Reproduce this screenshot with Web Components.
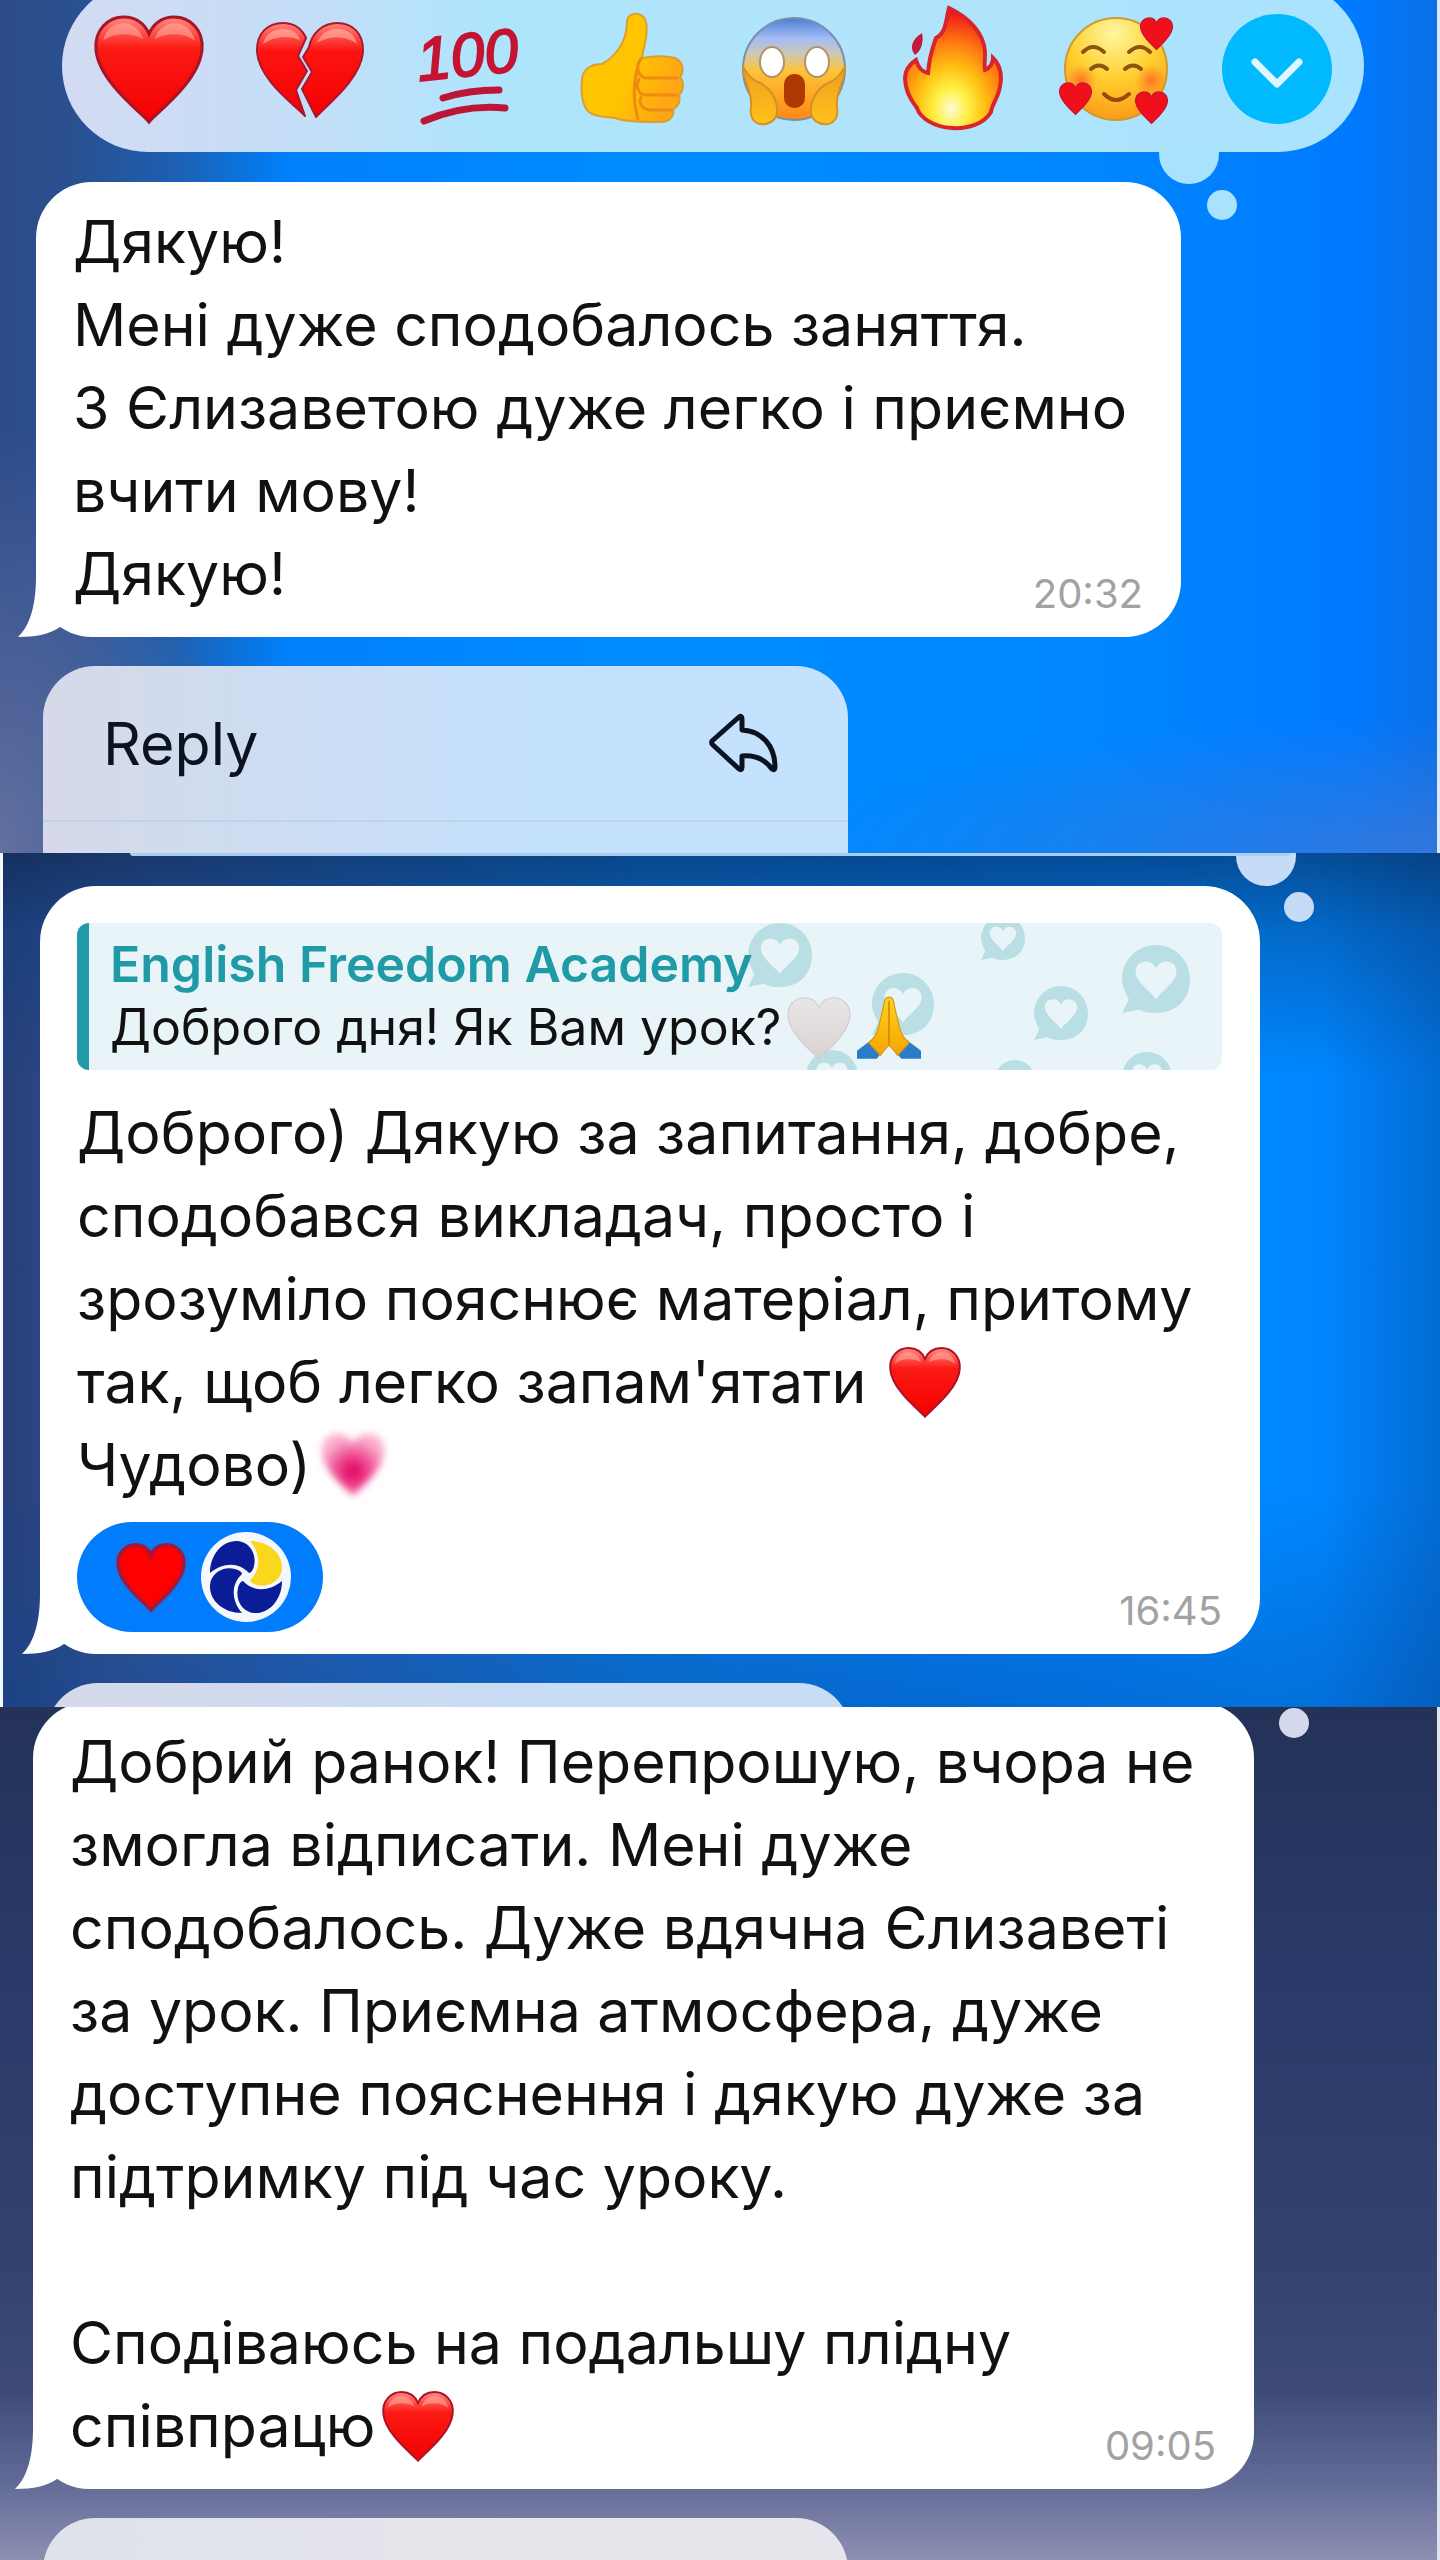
<!DOCTYPE html>
<html lang="uk">
<head>
<meta charset="utf-8">
<meta name="viewport" content="width=device-width, initial-scale=1">
<title>Відгуки</title>
<style>
    body {
        margin: 0;
        font-family: Inter, "Liberation Sans", sans-serif;
        color: #111;
    }

    .blue {
        --edge-right: 3px solid #dce8f8;
        --wall: radial-gradient(ellipse 16% 50% at 0 100%, rgba(104, 116, 164, .9), rgba(98, 110, 160, 0)),
            radial-gradient(ellipse 45% 16% at 100% 100%, rgba(60, 120, 215, .8), rgba(60, 120, 215, 0)),
            linear-gradient(90deg, #2d4b88 0%, #2a5090 5%, #1d5fb0 12%, #0080fc 20%, #008cff 45%, #0087ff 75%, #007aff 94%, #0a70e8 100%);
    }

    .dusk {
        --edge-left: 3px solid #f4f7fb;
        --wall: linear-gradient(180deg, rgba(8, 38, 80, .6) 0%, rgba(8, 60, 120, .4) 9%, rgba(0, 90, 180, 0) 26%, rgba(0, 90, 180, 0) 75%, rgba(8, 70, 150, .35) 100%),
            linear-gradient(90deg, rgba(8, 70, 140, 0) 92%, rgba(8, 70, 140, .35) 100%),
            linear-gradient(90deg, #27407a 0%, #32508f 8%, #2560b4 22%, #0878e0 45%, #0080fc 75%, #0088ff 88%, #0080fa 100%);
    }

    .night {
        --edge-right: 3px solid #dfe3ee;
        --wall: linear-gradient(180deg, #243258 0%, #2a3a68 30%, #33426f 65%, #3d4a78 80%, #666e9a 92%, #8e90b2 100%);
    }

    .blue chat-bubble { --gap-left: 36px; --gap-right: 256px; }
    .dusk chat-bubble { --gap-left: 37px; --gap-right: 180px; }
    .night chat-bubble { --gap-left: 33px; --gap-right: 183px; --gap-top: -5px; }

    .blue thought-dots { --top: 124px; --right: 200px; }
    .dusk thought-dots { --top: -27px; --right: 126px; --dots: #c6dbf5; }
    .night thought-dots { --top: -65px; --right: 128px; --dots: #d4d8ec; }

    .dusk context-menu { --height: 24px; --to: #c8dcf5; }
    .night context-menu { --height: 42px; --from: #dfe2ea; --to: #e6e6ec; }
</style>
</head>
<body>
<main>
    <chat-panel class="blue">
        <thought-dots></thought-dots>
        <reaction-bar></reaction-bar>
        <chat-bubble time="20:32">Дякую!<br>Мені дуже сподобалось заняття.<br>З Єлизаветою дуже легко і приємно<br>вчити мову!<br>Дякую!</chat-bubble>
        <context-menu><menu-item>Reply</menu-item></context-menu>
    </chat-panel>

    <chat-panel class="dusk">
        <thought-dots></thought-dots>
        <reaction-bar folded></reaction-bar>
        <chat-bubble time="16:45">
            <quote-card slot="quote" author="English Freedom Academy">Доброго дня! Як Вам урок?<chat-emoji name="white-heart"></chat-emoji><chat-emoji name="pray"></chat-emoji></quote-card>Доброго) Дякую за запитання, добре,<br>сподобався викладач, просто і<br>зрозуміло пояснює матеріал, притому<br>так, щоб легко запам'ятати <chat-emoji name="heart"></chat-emoji><br>Чудово)<chat-emoji name="glow-heart"></chat-emoji>
            <reaction-pill slot="reactions"></reaction-pill>
        </chat-bubble>
        <context-menu></context-menu>
    </chat-panel>

    <chat-panel class="night">
        <thought-dots></thought-dots>
        <chat-bubble time="09:05">Добрий ранок! Перепрошую, вчора не<br>змогла відписати. Мені дуже<br>сподобалось. Дуже вдячна Єлизаветі<br>за урок. Приємна атмосфера, дуже<br>доступне пояснення і дякую дуже за<br>підтримку під час уроку.<br><br>Сподіваюсь на подальшу плідну<br>співпрацю<chat-emoji name="heart"></chat-emoji></chat-bubble>
        <context-menu></context-menu>
    </chat-panel>
</main>

<script>
const HEART = 'M55 108C49 100 5 68 2 36C0 16 14 3 30 3C42 3 51 10 55 20C59 10 68 3 80 3C96 3 110 16 108 36C105 68 61 100 55 108Z';

const EMOJI = {
    'heart': `
        <defs>
            <linearGradient id="g" x2="0" y2="1"><stop offset="0" stop-color="#ff8a80"/><stop offset=".3" stop-color="#fb1a14"/><stop offset="1" stop-color="#f40000"/></linearGradient>
        </defs>
        <path d="${HEART}" fill="url(#g)" stroke="#a81428" stroke-width="3"/>
        <path d="M9 27C12 12 25 7 35 10C43 13 47 18 49 25C39 19 20 18 9 27ZM101 27C98 12 85 7 75 10C67 13 63 18 61 25C71 19 90 18 101 27Z" fill="#ffb0a0" opacity=".55"/>`,
    'flat-heart': `
        <path d="${HEART}" fill="#fe0000" stroke="#a3183c" stroke-width="6"/>`,
    'white-heart': `
        <defs>
            <linearGradient id="g" x2="0" y2="1"><stop offset="0" stop-color="#e9e5e6"/><stop offset="1" stop-color="#d9d2d3"/></linearGradient>
        </defs>
        <path d="${HEART}" fill="url(#g)" stroke="#d2cccd" stroke-width="2"/>`,
    'glow-heart': `
        <defs>
            <filter id="b" x="-.2" y="-.2" width="1.4" height="1.4"><feGaussianBlur stdDeviation="6"/></filter>
            <radialGradient id="g" cy=".6" r=".55"><stop offset="0" stop-color="#e0005c"/><stop offset=".3" stop-color="#ea2a7e"/><stop offset="1" stop-color="#fbb4d2"/></radialGradient>
        </defs>
        <path d="M55 103C49 95 9 66 7 36C6 16 18 7 32 7C44 7 51 14 55 22C59 14 66 7 78 7C92 7 104 16 103 36C101 66 61 95 55 103Z" fill="url(#g)" filter="url(#b)"/>`,
    'broken-heart': `
        <defs>
            <linearGradient id="g" x2="0" y2="1"><stop offset="0" stop-color="#ff8478"/><stop offset=".3" stop-color="#fc1410"/><stop offset="1" stop-color="#f40000"/></linearGradient>
        </defs>
        <g fill="url(#g)" stroke="#a81830" stroke-width="2" stroke-linejoin="round">
            <path d="M50 102C40 91 4 66 2 38C1 19 13 9 28 9C39 9 47 15 51 24L43 42L52 57L41 76Z"/>
            <path d="M61 103C72 91 106 65 108 38C109 19 97 9 82 9C68 9 57 19 54 33L48 43L57 58L47 75Z"/>
        </g>
        <path d="M8 30C11 17 24 13 35 16C41 18 44 22 45 26C34 21 19 22 8 30ZM102 30C99 17 86 13 75 16C68 18 64 24 62 29C72 22 91 21 102 30Z" fill="#ffb8ac" opacity=".6"/>`,
    'hundred': `
        <text x="3" y="67" transform="rotate(-6 3 67)" font-family="Liberation Sans, sans-serif" font-size="61" font-style="italic" fill="#c41432" stroke="#c41432" stroke-width="2">100</text>
        <path d="M27 84Q52 76 83 76M8 107Q48 90 89 94" fill="none" stroke="#bd1536" stroke-width="7" stroke-linecap="round"/>`,
    'thumb': `
        <defs>
            <linearGradient id="g" x2="1" y2=".5"><stop offset="0" stop-color="#fdc800"/><stop offset=".6" stop-color="#ffc400"/><stop offset="1" stop-color="#ffa516"/></linearGradient>
        </defs>
        <path d="M50 8C50 -3 67 -3 69 8C72 22 66 34 65 44C76 42 90 42 98 44C107 48 107 58 103 63C108 69 106 78 102 81C104 87 101 93 96 95C98 103 91 108 84 108C67 108 49 108 38 104C28 102 20 104 12 98C4 91 4 77 5 65C6 55 14 50 25 50C36 44 50 30 50 8Z" fill="url(#g)" stroke="#d9a030" stroke-width="2"/>
        <path d="M64 45C58 52 61 62 68 64H100M62 65C58 73 62 81 69 81H99M64 83C61 90 66 95 73 96H94M61 52C56 70 56 88 61 105" fill="none" stroke="#ee8c10" stroke-width="3" stroke-linecap="round"/>`,
    'scream': `
        <defs>
            <linearGradient id="g" x2="0" y2="1"><stop offset="0" stop-color="#4a7fd2"/><stop offset=".2" stop-color="#a4bbf5"/><stop offset=".36" stop-color="#d0c8b0"/><stop offset=".52" stop-color="#ffc336"/><stop offset="1" stop-color="#ff8714"/></linearGradient>
            <linearGradient id="h" x2="0" y2="1"><stop offset="0" stop-color="#f19c20"/><stop offset="1" stop-color="#ffc21a"/></linearGradient>
        </defs>
        <circle cx="55" cy="55" r="51" fill="url(#g)" stroke="#7890ae" stroke-width="2"/>
        <ellipse cx="33" cy="48" rx="12" ry="15" fill="#fff" stroke="#b09468" stroke-width="2"/>
        <ellipse cx="78" cy="48" rx="12" ry="15" fill="#fff" stroke="#b09468" stroke-width="2"/>
        <rect x="45" y="60" width="21" height="34" rx="10" fill="#ae3800"/>
        <path id="p" d="M4 53C4 68 14 78 12 93C8 116 36 114 38 99C39 86 32 75 21 69C11 65 9 60 4 53Z" fill="url(#h)" stroke="#d2922a" stroke-width="2"/>
        <use href="#p" transform="matrix(-1 0 0 1 110 0)"/>`,
    'fire': `
        <defs>
            <radialGradient id="g" cx=".48" cy=".84" r=".8"><stop offset="0" stop-color="#fffbd0"/><stop offset=".22" stop-color="#fff044"/><stop offset=".45" stop-color="#ffbe10"/><stop offset=".7" stop-color="#ff7812"/><stop offset="1" stop-color="#f01818"/></radialGradient>
        </defs>
        <path d="M49 -6C70 4 84 20 85 38C85 46 84 52 85 56C90 54 93 49 93 44C103 54 102 68 98 80C94 90 91 94 91 98C84 110 68 115 52 114C34 113 20 104 17 94C9 84 5 74 5 64C5 55 10 50 16 46C18 53 22 58 28 59C29 45 32 35 36 24C47 18 46 4 49 -6Z" fill="url(#g)" stroke="#d8242a" stroke-width="4"/>
        <path d="M22 19C12 25 9 34 15 41C21 37 24 28 22 19Z" fill="#c01a3c"/>`,
    'love': `
        <defs>
            <radialGradient id="g" cx=".48" cy=".15" r=".9"><stop offset="0" stop-color="#fff7a0"/><stop offset=".5" stop-color="#ffcf2e"/><stop offset="1" stop-color="#fb9416"/></radialGradient>
            <radialGradient id="c"><stop offset="0" stop-color="#ff5c28" stop-opacity=".75"/><stop offset="1" stop-color="#ff7020" stop-opacity="0"/></radialGradient>
            <path id="h" d="${HEART}" fill="#f0101c" stroke="#c41438" stroke-width="4"/>
        </defs>
        <circle cx="55" cy="55" r="51" fill="url(#g)" stroke="#cf9a30" stroke-width="2"/>
        <circle cx="20" cy="66" r="16" fill="url(#c)"/>
        <circle cx="90" cy="66" r="16" fill="url(#c)"/>
        <path d="M22 38Q32 28 43 38M68 38Q79 28 89 38M30 55Q38 48 46 55M64 55Q72 48 80 55" fill="none" stroke="#8c5410" stroke-width="4" stroke-linecap="round"/>
        <path d="M43 80Q55 92 68 80" fill="none" stroke="#9a4a08" stroke-width="4" stroke-linecap="round"/>
        <use href="#h" transform="translate(79 3) scale(.3)"/>
        <use href="#h" transform="translate(-2 68) scale(.3)"/>
        <use href="#h" transform="translate(74 77) scale(.3)"/>`,
    'pray': `
        <defs>
            <linearGradient id="g" x2="0" y2="1"><stop offset="0" stop-color="#ffd21a"/><stop offset="1" stop-color="#f7a400"/></linearGradient>
        </defs>
        <path d="M0 108V94L24 76L42 98L34 108ZM110 108V94L86 76L68 98L76 108Z" fill="#2b7cc8"/>
        <path d="M55 2C48 2 47 8 46 16L37 54C34 66 26 76 20 80L40 102C45 94 52 88 55 84C58 88 65 94 70 102L90 80C84 76 76 66 73 54L64 16C63 8 62 2 55 2Z" fill="url(#g)" stroke="#d99410" stroke-width="2"/>
        <path d="M55 8V84" stroke="#d58a08" stroke-width="3"/>`
};

customElements.define('chat-emoji',
    class extends HTMLElement {
        connectedCallback(){
            const shadowRoot = this.attachShadow({mode: 'open'});
            shadowRoot.innerHTML = `
    <style>
        :host{
            display: inline-block;
            width: var(--emoji-size, 72px);
            height: var(--emoji-size, 72px);
            vertical-align: -15px;
        }

        svg{
            display: block;
            width: 100%;
            height: 100%;
            overflow: visible;
        }
    </style>
    <svg viewBox="0 0 110 110" aria-hidden="true">${EMOJI[this.getAttribute('name')]}</svg>
`;
        }
    }
);

customElements.define('chat-panel',
    class extends HTMLElement {
        connectedCallback(){
            const shadowRoot = this.attachShadow({mode: 'open'});
            shadowRoot.innerHTML = `
    <style>
        :host{
            display: flex;
            flex-direction: column;
            position: relative;
            overflow: hidden;
            border-left: var(--edge-left, none);
            border-right: var(--edge-right, none);
            background: var(--wall);
        }
    </style>
    <slot></slot>
`;
        }
    }
);

/* the two circles that hang under the reaction bar */
customElements.define('thought-dots',
    class extends HTMLElement {
        connectedCallback(){
            const shadowRoot = this.attachShadow({mode: 'open'});
            shadowRoot.innerHTML = `
    <style>
        :host{
            position: absolute;
            top: var(--top);
            right: var(--right);
        }

        svg{
            display: block;
            fill: var(--dots, #a9e2fc);
        }
    </style>
    <svg width="78" height="96" aria-hidden="true">
        <circle cx="30" cy="30" r="30"/>
        <circle cx="63" cy="81" r="15"/>
    </svg>
`;
        }
    }
);

customElements.define('reaction-bar',
    class extends HTMLElement {
        connectedCallback(){
            const names = ['heart', 'broken-heart', 'hundred', 'thumb', 'scream', 'fire', 'love'];
            const shadowRoot = this.attachShadow({mode: 'open'});
            shadowRoot.innerHTML = `
    <style>
        :host{
            --emoji-size: 110px;
            display: flex;
            justify-content: space-between;
            position: relative;
            margin: -20px 73px 0 62px;
            padding: 34px 32px 28px;
            border-radius: 86px;
            background: linear-gradient(90deg, #d3dbf2 0%, #c3dff8 20%, #ade5fd 34%, #b2e4fb 60%, #a9e3fd 100%);
        }

        /* only the lower edge of the bar is in view */
        :host([folded]){
            height: 3px;
            margin: 0 150px 0 127px;
            padding: 0;
            border-radius: 0 0 3px 3px;
            background: #a9cdf0;
        }

        :host([folded]) button{
            display: none;
        }

        button{
            width: 110px;
            height: 110px;
            padding: 0;
            border: 0;
            background: none;
        }

        chat-emoji{
            display: block;
        }

        .more{
            border-radius: 50%;
            background: #00b9ff;
        }
    </style>
    ${names.map(name => `<button type="button" aria-label="${name}"><chat-emoji name="${name}"></chat-emoji></button>`).join('')}
    <button type="button" class="more" aria-label="more">
        <svg width="110" height="110" viewBox="0 0 110 110" fill="none" stroke="#dff6ff" stroke-width="7" stroke-linecap="round" stroke-linejoin="round"><path d="M33 48L55 70L77 48"/></svg>
    </button>
`;
        }
    }
);

customElements.define('chat-bubble',
    class extends HTMLElement {
        connectedCallback(){
            const shadowRoot = this.attachShadow({mode: 'open'});
            shadowRoot.innerHTML = `
    <style>
        :host{
            display: grid;
            position: relative;
            margin: var(--gap-top, 30px) var(--gap-right) 0 var(--gap-left);
            padding: 18px 38px 22px 37px;
            border-radius: 56px;
            background: #fff;
            font-size: 59px;
            line-height: 83px;
        }

        .body, time{
            grid-area: 1 / 1;
        }

        ::slotted(chat-emoji){
            margin-left: 6px;
        }

        time{
            align-self: end;
            justify-self: end;
            font-size: 40px;
            line-height: 42px;
            color: #a2a2a4;
        }

        .tail{
            position: absolute;
            left: -20px;
            bottom: 0;
            fill: #fff;
        }
    </style>
    <div class="body">
        <slot name="quote"></slot>
        <div><slot></slot></div>
        <slot name="reactions"></slot>
    </div>
    <time>${this.getAttribute('time')}</time>
    <svg class="tail" width="56" height="60" aria-hidden="true"><path d="M20 0C20 30 13 50 2 60C20 60 34 57 44 50L54 20Z"/></svg>
`;
        }
    }
);

customElements.define('quote-card',
    class extends HTMLElement {
        connectedCallback(){
            /* x, y and radius of every chat heart in the pattern */
            const marks = [[58, 32, 32], [181, 81, 31], [281, 15, 22], [434, 56, 34], [339, 90, 27], [110, 153, 26], [293, 157, 20], [425, 154, 25]];
            const shadowRoot = this.attachShadow({mode: 'open'});
            shadowRoot.innerHTML = `
    <style>
        :host{
            --emoji-size: 64px;
            display: block;
            position: relative;
            overflow: hidden;
            margin: 19px 0 21px;
            padding: 10px 12px 11px 21px;
            border-left: 12px solid #1f9aa6;
            border-radius: 12px;
            background: #e8f4f7;
            font-size: 50px;
            line-height: 63px;
        }

        cite, .text{
            display: block;
            position: relative;
        }

        cite{
            font-style: normal;
            font-weight: 600;
            color: #1f9aa6;
        }

        .text{
            height: 63px;
        }

        .pattern{
            position: absolute;
            top: 0;
            right: 0;
        }

        ::slotted(chat-emoji){
            margin-left: 6px;
        }
    </style>
    <svg class="pattern" width="500" height="147" aria-hidden="true">
        <defs>
            <g id="m">
                <path d="M0 -10C6 -10 10 -5 10 0C10 6 6 10 0 10C-2 10 -3 10 -5 9L-10 10L-8 6C-9 4 -10 2 -10 0C-10 -5 -6 -10 0 -10Z" fill="#b9dfe4"/>
                <path d="M0 6C-1 4 -6 1 -6 -2C-6 -6 -1 -6 0 -3C1 -6 6 -6 6 -2C6 1 1 4 0 6Z" fill="#e8f4f7"/>
            </g>
        </defs>
        ${marks.map(([x, y, r]) => `<use href="#m" transform="translate(${x} ${y}) scale(${r / 10})"/>`).join('')}
    </svg>
    <cite>${this.getAttribute('author')}</cite>
    <div class="text"><slot></slot></div>
`;
        }
    }
);

customElements.define('reaction-pill',
    class extends HTMLElement {
        connectedCallback(){
            const shadowRoot = this.attachShadow({mode: 'open'});
            shadowRoot.innerHTML = `
    <style>
        :host{
            display: block;
            margin-top: 16px;
        }

        button{
            --emoji-size: 68px;
            display: flex;
            align-items: center;
            gap: 16px;
            height: 110px;
            padding: 0 32px 0 40px;
            border: 0;
            border-radius: 55px;
            background: #007cfd;
        }
    </style>
    <button type="button" aria-label="heart">
        <chat-emoji name="flat-heart"></chat-emoji>
        <svg width="90" height="90" viewBox="0 0 90 90" aria-hidden="true">
            <defs>
                <path id="b" d="M49 9C67 9 82 21 81 37C80 48 69 56 56 53C52 52 49 50 49 48C60 38 60 22 49 9Z"/>
            </defs>
            <circle cx="45" cy="45" r="45" fill="#f4f8fd"/>
            <use href="#b" fill="#f9d71c"/>
            <g fill="#0a1c96">
                <use href="#b" transform="rotate(90 45 45)"/>
                <use href="#b" transform="rotate(180 45 45)"/>
                <use href="#b" transform="rotate(270 45 45)"/>
            </g>
        </svg>
    </button>
`;
        }
    }
);

customElements.define('context-menu',
    class extends HTMLElement {
        connectedCallback(){
            const shadowRoot = this.attachShadow({mode: 'open'});
            shadowRoot.innerHTML = `
    <style>
        :host{
            display: block;
            overflow: hidden;
            width: 56%;
            height: var(--height, auto);
            margin: 29px 0 0 43px;
        }

        .sheet{
            min-height: 156px;
            border-radius: 52px 52px 0 0;
            background: linear-gradient(90deg, var(--from, #d6d9e8) 0%, var(--to, #c4e1fd) 60%);
        }
    </style>
    <div class="sheet"><slot></slot></div>
`;
        }
    }
);

customElements.define('menu-item',
    class extends HTMLElement {
        connectedCallback(){
            const shadowRoot = this.attachShadow({mode: 'open'});
            shadowRoot.innerHTML = `
    <style>
        :host{
            display: block;
            padding-bottom: 31px;
        }

        button{
            display: flex;
            justify-content: space-between;
            align-items: center;
            width: 100%;
            height: 156px;
            padding: 0 70px 0 60px;
            border: 0;
            border-bottom: 2px solid #bfd3ea;
            background: none;
            font: inherit;
            font-size: 59px;
            color: #0b1220;
        }
    </style>
    <button type="button">
        <slot></slot>
        <svg width="70" height="60" viewBox="0 0 70 60" fill="none" stroke="#0b1220" stroke-width="5" stroke-linejoin="round" aria-hidden="true">
            <path d="M4 28Q3 30 5 32L31 56Q34 58 34 54V43C47 42 57 46 64 56Q67 58 67 54C67 33 54 18 34 17V6Q34 2 31 4Z"/>
        </svg>
    </button>
`;
        }
    }
);
</script>
</body>
</html>
